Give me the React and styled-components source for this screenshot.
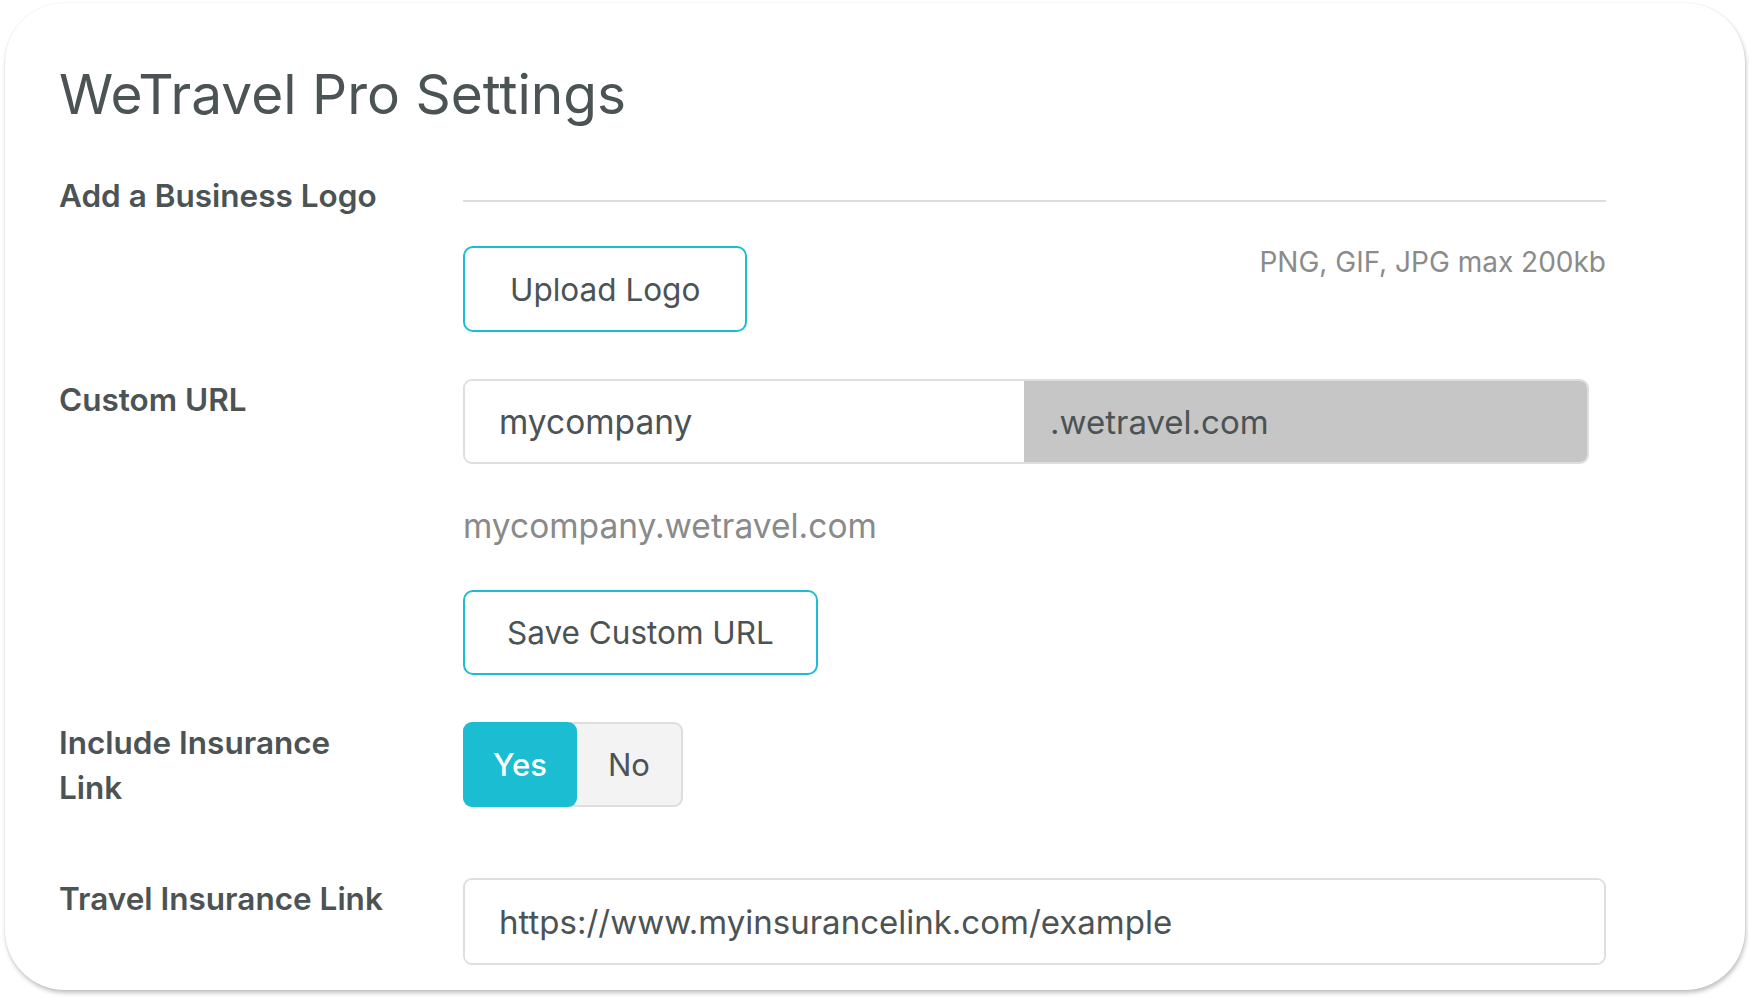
import React from 'react';
import styled, { createGlobalStyle } from 'styled-components';

const FONT = `"Inter", "Open Sans", sans-serif`;
const TEXT = '#4b5355';
const CYAN = '#1bbdd3';

const Global = createGlobalStyle`
  html, body { margin: 0; padding: 0; background: #ffffff; }
  body { font-family: ${FONT}; color: ${TEXT}; }
  * { box-sizing: border-box; }
`;

const Page = styled.div`
  width: 1749px;
  height: 999px;
  padding: 3px 4px 0 5px;
  overflow: hidden;
`;

const Card = styled.section`
  width: 1740px;
  height: 987px;
  background: #ffffff;
  border-radius: 60px;
  box-shadow: 1px 3px 4px rgba(0, 0, 0, 0.24), 0 0 2px rgba(0, 0, 0, 0.08);
  padding: 59px 139px 0 54px;
`;

const Title = styled.h1`
  margin: 0;
  font-size: 55px;
  line-height: 65px;
  font-weight: 400;
  color: ${TEXT};
`;

const Row = styled.div`
  display: grid;
  grid-template-columns: 404px 1fr;
  align-items: start;
  margin-top: ${(p) => p.$gap}px;
`;

const Label = styled.div`
  font-size: 31.5px;
  font-weight: 600;
  line-height: ${(p) => p.$lh || 42}px;
  max-width: 335px;
  color: ${TEXT};
`;

const Content = styled.div`
  display: flex;
  flex-direction: column;
  align-items: flex-start;
`;

const Divider = styled.div`
  width: 100%;
  height: 2px;
  background: #dddddd;
  margin-top: 27px;
`;

const UploadLine = styled.div`
  width: 100%;
  display: flex;
  justify-content: space-between;
  align-items: flex-start;
  margin-top: 44px;
`;

const OutlineButton = styled.button`
  height: ${(p) => p.$h || 86}px;
  padding: 0 ${(p) => p.$px || 45}px;
  border: 2px solid ${CYAN};
  border-radius: 10px;
  background: #ffffff;
  font-family: ${FONT};
  font-size: 31.5px;
  font-weight: 400;
  color: ${TEXT};
  cursor: pointer;
  margin-top: ${(p) => p.$mt || 0}px;
`;

const Hint = styled.span`
  font-size: 28px;
  line-height: 32px;
  color: #8b8b8b;
`;

const InputGroup = styled.div`
  width: ${(p) => p.$w || 1126}px;
  height: ${(p) => p.$h || 85}px;
  display: flex;
  border: 2px solid #dedede;
  border-radius: 9px;
  overflow: hidden;
`;

const TextInput = styled.input`
  flex: ${(p) => (p.$basis ? `0 0 ${p.$basis}px` : '1 1 auto')};
  min-width: 0;
  height: 100%;
  border: none;
  outline: none;
  background: #ffffff;
  padding: 0 0 0 34px;
  font-family: ${FONT};
  font-size: ${(p) => p.$fs || 33.5}px;
  color: ${TEXT};
`;

const Addon = styled.div`
  flex: 1 1 auto;
  display: flex;
  align-items: center;
  padding-left: 26px;
  background: #c6c6c6;
  font-size: 33px;
  color: ${TEXT};
`;

const Preview = styled.div`
  margin-top: 42px;
  font-size: 33.5px;
  line-height: 40px;
  color: #8a8a8a;
`;

const Toggle = styled.div`
  display: flex;
  height: 85px;
  margin-top: 2px;
  border: 2px solid #dedede;
  border-radius: 9px;
  background: #f3f3f3;
`;

const ToggleOption = styled.button`
  width: ${(p) => p.$w}px;
  margin: ${(p) => (p.$active ? '-2px 0 -2px -2px' : '0')};
  height: ${(p) => (p.$active ? 'calc(100% + 4px)' : '100%')};
  border: none;
  border-radius: 9px;
  background: ${(p) => (p.$active ? CYAN : 'transparent')};
  color: ${(p) => (p.$active ? '#ffffff' : TEXT)};
  font-family: ${FONT};
  font-size: 31px;
  font-weight: ${(p) => (p.$active ? 500 : 400)};
  cursor: pointer;
`;

export default function App() {
  return (
    <>
      <Global />
      <Page>
        <Card>
          <Title>WeTravel Pro Settings</Title>

          <Row $gap={46}>
            <Label $lh={46}>Add a Business Logo</Label>
            <Content>
              <Divider />
              <UploadLine>
                <OutlineButton>Upload Logo</OutlineButton>
                <Hint>PNG, GIF, JPG max 200kb</Hint>
              </UploadLine>
            </Content>
          </Row>

          <Row $gap={47}>
            <Label>Custom URL</Label>
            <Content>
              <InputGroup>
                <TextInput $basis={559} defaultValue="mycompany" readOnly />
                <Addon>.wetravel.com</Addon>
              </InputGroup>
              <Preview>mycompany.wetravel.com</Preview>
              <OutlineButton $h={85} $mt={44} $px={42}>Save Custom URL</OutlineButton>
            </Content>
          </Row>

          <Row $gap={45}>
            <Label $lh={45}>Include Insurance Link</Label>
            <Content>
              <Toggle>
                <ToggleOption $active $w={114}>Yes</ToggleOption>
                <ToggleOption $w={104}>No</ToggleOption>
              </Toggle>
            </Content>
          </Row>

          <Row $gap={68}>
            <Label>Travel Insurance Link</Label>
            <Content>
              <InputGroup $w={1143} $h={87}>
                <TextInput $fs={33} defaultValue="https://www.myinsurancelink.com/example" readOnly />
              </InputGroup>
            </Content>
          </Row>
        </Card>
      </Page>
    </>
  );
}
